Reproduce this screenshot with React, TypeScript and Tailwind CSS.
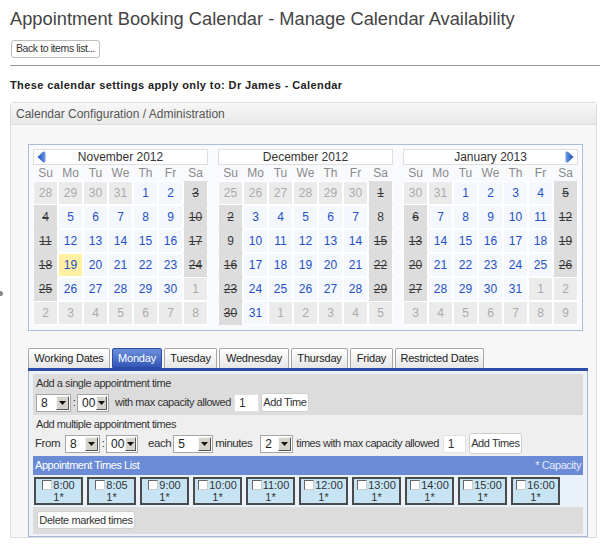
import React from "react";

type Month = { name: string; first: number; prev: number; days: number; arrow?: "left" | "right" };

const months: Month[] = [
  { name: "November 2012", first: 4, prev: 31, days: 30, arrow: "left" },
  { name: "December 2012", first: 6, prev: 30, days: 31 },
  { name: "January 2013", first: 2, prev: 31, days: 31, arrow: "right" },
];

const noStrike = ["December 2012-8", "December 2012-9"];

function Arrow({ dir }: { dir: "left" | "right" }) {
  return (
    <svg width="9" height="12" viewBox="0 0 9 12" className={dir === "right" ? "rotate-180" : ""}>
      <defs>
        <linearGradient id={"ag" + dir} x1="0" y1="0" x2="1" y2="0">
          <stop offset="0" stopColor="#1d4fb8" />
          <stop offset="1" stopColor="#6f9ae6" />
        </linearGradient>
      </defs>
      <path d="M0.5 6 L6 0.8 Q8.5 -0.4 8.5 2.5 L8.5 9.5 Q8.5 12.4 6 11.2 Z" fill={"url(#ag" + dir + ")"} />
    </svg>
  );
}

function MonthView({ m }: { m: Month }) {
  const cells = [];
  for (let i = 0; i < 42; i++) {
    const n = i - m.first + 1;
    const dow = i % 7;
    let label = n;
    let cls = "";
    if (n < 1 || n > m.days) {
      label = n < 1 ? m.prev + n : n - m.days;
      cls = "bg-[#ebebeb] text-[#ababab] border-white";
    } else if (dow === 0 || dow === 6) {
      const strike = !noStrike.includes(m.name + "-" + n);
      cls = "bg-[#dddddd] text-[#3a3a3a] border-x-white border-y-[#dddddd] " + (strike ? "line-through" : "");
    } else if (m.name === "November 2012" && n === 19) {
      cls = "bg-[#fff0a3] text-[#2451c4] border-white";
    } else {
      cls = "bg-[#f4f7fb] text-[#2451c4] border-white";
    }
    cells.push(
      <div key={i} className={"flex h-[24px] items-center justify-center border text-[12px] " + cls}>
        {label}
      </div>
    );
  }
  return (
    <div className="w-[175px]">
      <div className="relative flex h-[16px] items-center justify-center border border-[#dedede] bg-white text-[12px] text-[#333]">
        {m.arrow === "left" && (
          <span className="absolute left-[3px] top-[1px]">
            <Arrow dir="left" />
          </span>
        )}
        {m.name}
        {m.arrow === "right" && (
          <span className="absolute right-[3px] top-[1px]">
            <Arrow dir="right" />
          </span>
        )}
      </div>
      <div className="grid h-[16px] grid-cols-7 text-center text-[12px] leading-[16px] text-[#8a8a8a]">
        {["Su", "Mo", "Tu", "We", "Th", "Fr", "Sa"].map((d) => (
          <div key={d}>{d}</div>
        ))}
      </div>
      <div className="grid grid-cols-7">{cells}</div>
    </div>
  );
}

function Sel({ v, w }: { v: string; w: string }) {
  return (
    <div className={"flex h-[18px] border border-[#a5a5a5] bg-white " + w}>
      <div className="flex-1 pl-[4px] text-[12px] leading-[16px] tracking-normal text-[#222]">{v}</div>
      <div className="m-[1px] flex w-[13px] items-center justify-center border border-t-[#f4f4f4] border-l-[#f4f4f4] border-b-[#555] border-r-[#555] bg-[#d6d3cc]">
        <svg width="7" height="4" viewBox="0 0 7 4">
          <path d="M0 0 L7 0 L3.5 4 Z" fill="#111" />
        </svg>
      </div>
    </div>
  );
}

function Btn({ children, cls }: { children: React.ReactNode; cls: string }) {
  return (
    <div className={"flex items-center justify-center whitespace-nowrap rounded-[3px] border border-[#cfcfcf] bg-white text-[11px] tracking-[-0.4px] text-[#333] " + cls}>
      {children}
    </div>
  );
}

const tabs = [
  { t: "Working Dates", w: "w-[82px]" },
  { t: "Monday", w: "w-[50px]" },
  { t: "Tuesday", w: "w-[53px]" },
  { t: "Wednesday", w: "w-[70px]" },
  { t: "Thursday", w: "w-[57px]" },
  { t: "Friday", w: "w-[43px]" },
  { t: "Restricted Dates", w: "w-[89px]" },
];

const times = ["8:00", "8:05", "9:00", "10:00", "11:00", "12:00", "13:00", "14:00", "15:00", "16:00"];

export default function App() {
  return (
    <div className="relative h-[549px] w-[600px] overflow-hidden bg-white font-['Liberation_Sans',Arial,sans-serif] text-[#333]">
      <h1 className="whitespace-nowrap pl-[10px] pt-[7px] text-[18.3px] leading-[24px] text-[#444]">
        Appointment Booking Calendar - Manage Calendar Availability
      </h1>
      <div className="ml-[11px] mt-[9px] flex h-[18px] w-[89px] items-center justify-center whitespace-nowrap rounded-[3px] border border-[#bdbdbd] bg-white text-[10.5px] tracking-[-0.4px] text-[#333]">
        Back to items list...
      </div>
      <div className="ml-[10px] mt-[7px] border-t border-[#9a9a9a]" />
      <div className="ml-[10px] mt-[12px] whitespace-nowrap text-[11px] font-bold leading-[14px] tracking-[0.4px] text-[#222]">
        These calendar settings apply only to: Dr James - Calendar
      </div>

      <div className="ml-[10px] mt-[10px] w-[587px] rounded-t-[3px] border border-[#dcdcdc] bg-[#f7f7f7]">
        <div className="flex h-[22px] items-center border-b border-[#dcdcdc] bg-gradient-to-b from-[#f7f7f7] to-[#e9e9e9] pl-[5px] text-[12px] text-[#555]">
          Calendar Configuration / Administration
        </div>
        <div className="pl-[17px] pt-[19px]">
          <div className="flex w-[555px] gap-[10px] border border-[#a9bfdc] bg-[#f8fafd] px-[4px] pb-[5px] pt-[4px]">
            {months.map((m) => (
              <MonthView key={m.name} m={m} />
            ))}
          </div>

          <div className="mt-[17px] flex gap-[2px]">
            {tabs.map((t) =>
              t.t === "Monday" ? (
                <div
                  key={t.t}
                  className={"flex h-[20px] items-center justify-center whitespace-nowrap rounded-t-[2px] border border-[#2b4ba6] bg-gradient-to-b from-[#6d8fdc] to-[#3357b7] text-[11px] tracking-[-0.2px] text-white " + t.w}
                >
                  {t.t}
                </div>
              ) : (
                <div
                  key={t.t}
                  className={"flex h-[20px] items-center justify-center whitespace-nowrap rounded-t-[2px] border border-b-0 border-[#a8a8a8] bg-gradient-to-b from-white to-[#e6e6e6] text-[11px] tracking-[-0.2px] text-[#222] " + t.w}
                >
                  {t.t}
                </div>
              )
            )}
          </div>

          <div className="w-[560px] border-t-[3px] border-[#2b4ca7]">
            <div className="whitespace-nowrap border border-t-0 border-[#a3b8d8] bg-[#eef2f8] px-[4px] pb-[2px] pt-[3px] text-[11px] tracking-[-0.45px] text-[#333]">
              <div className="h-[41px] bg-[#dcdcdc] pl-[3px] pt-[3px]">
                <div className="leading-[13px]">Add a single appointment time</div>
                <div className="mt-[3px] flex items-center">
                  <Sel v="8" w="w-[35px]" />
                  <span className="w-[6px] text-center">:</span>
                  <Sel v="00" w="w-[32px]" />
                  <span className="ml-[6px]">with max capacity allowed</span>
                  <div className="ml-[3px] h-[18px] w-[25px] border border-[#e2e2e2] bg-white pl-[4px] text-[12px] leading-[16px] tracking-normal">1</div>
                  <Btn cls="ml-[2px] h-[19px] w-[48px]">Add Time</Btn>
                </div>
              </div>
              <div className="h-[41px] bg-[#efefef] pl-[2px] pt-[3px]">
                <div className="pl-[1px] leading-[13px]">Add multiple appointment times</div>
                <div className="mt-[2px] flex items-center">
                  <span className="text-[11.5px]">From</span>
                  <Sel v="8" w="ml-[5px] w-[35px]" />
                  <span className="w-[6px] text-center">:</span>
                  <Sel v="00" w="w-[32px]" />
                  <span className="ml-[10px] text-[11.5px]">each</span>
                  <Sel v="5" w="ml-[2px] w-[40px]" />
                  <span className="ml-[2px] text-[11.5px]">minutes</span>
                  <Sel v="2" w="ml-[8px] w-[33px]" />
                  <span className="ml-[3px]">times with max capacity allowed</span>
                  <div className="ml-[4px] h-[18px] w-[23px] border border-[#e2e2e2] bg-white pl-[4px] text-[12px] leading-[16px] tracking-normal">1</div>
                  <Btn cls="ml-[3px] h-[21px] w-[53px]">Add Times</Btn>
                </div>
              </div>
              <div className="flex h-[19px] items-center justify-between bg-[#6b8bd6] px-[2px] text-[11px]">
                <span className="text-white">Appointment Times List</span>
                <span className="text-[#e3e9fb]">* Capacity</span>
              </div>
              <div className="flex h-[32px] items-center gap-[4px] bg-[#e9f1fb] pl-[1px]">
                {times.map((t) => (
                  <div
                    key={t}
                    className="flex h-[28px] w-[49px] flex-col items-center justify-center border-2 border-[#4a4a4a] bg-[#c7e4f5] text-[11px] leading-[12px] tracking-normal text-[#333]"
                  >
                    <div className="flex items-center">
                      <span className="mr-[1px] inline-block h-[10px] w-[10px] border border-b-[#ccc] border-r-[#ccc] border-l-[#666] border-t-[#666] bg-white" />
                      {t}
                    </div>
                    <div>1*</div>
                  </div>
                ))}
              </div>
              <div className="h-[27px] bg-[#dcdcdc] pl-[4px] pt-[4px]">
                <Btn cls="h-[18px] w-[98px]">Delete marked times</Btn>
              </div>
            </div>
          </div>
        </div>
      </div>

      <span className="absolute left-0 top-[291px] h-[5px] w-[3px] rounded-r-full bg-[#888]" />
    </div>
  );
}
